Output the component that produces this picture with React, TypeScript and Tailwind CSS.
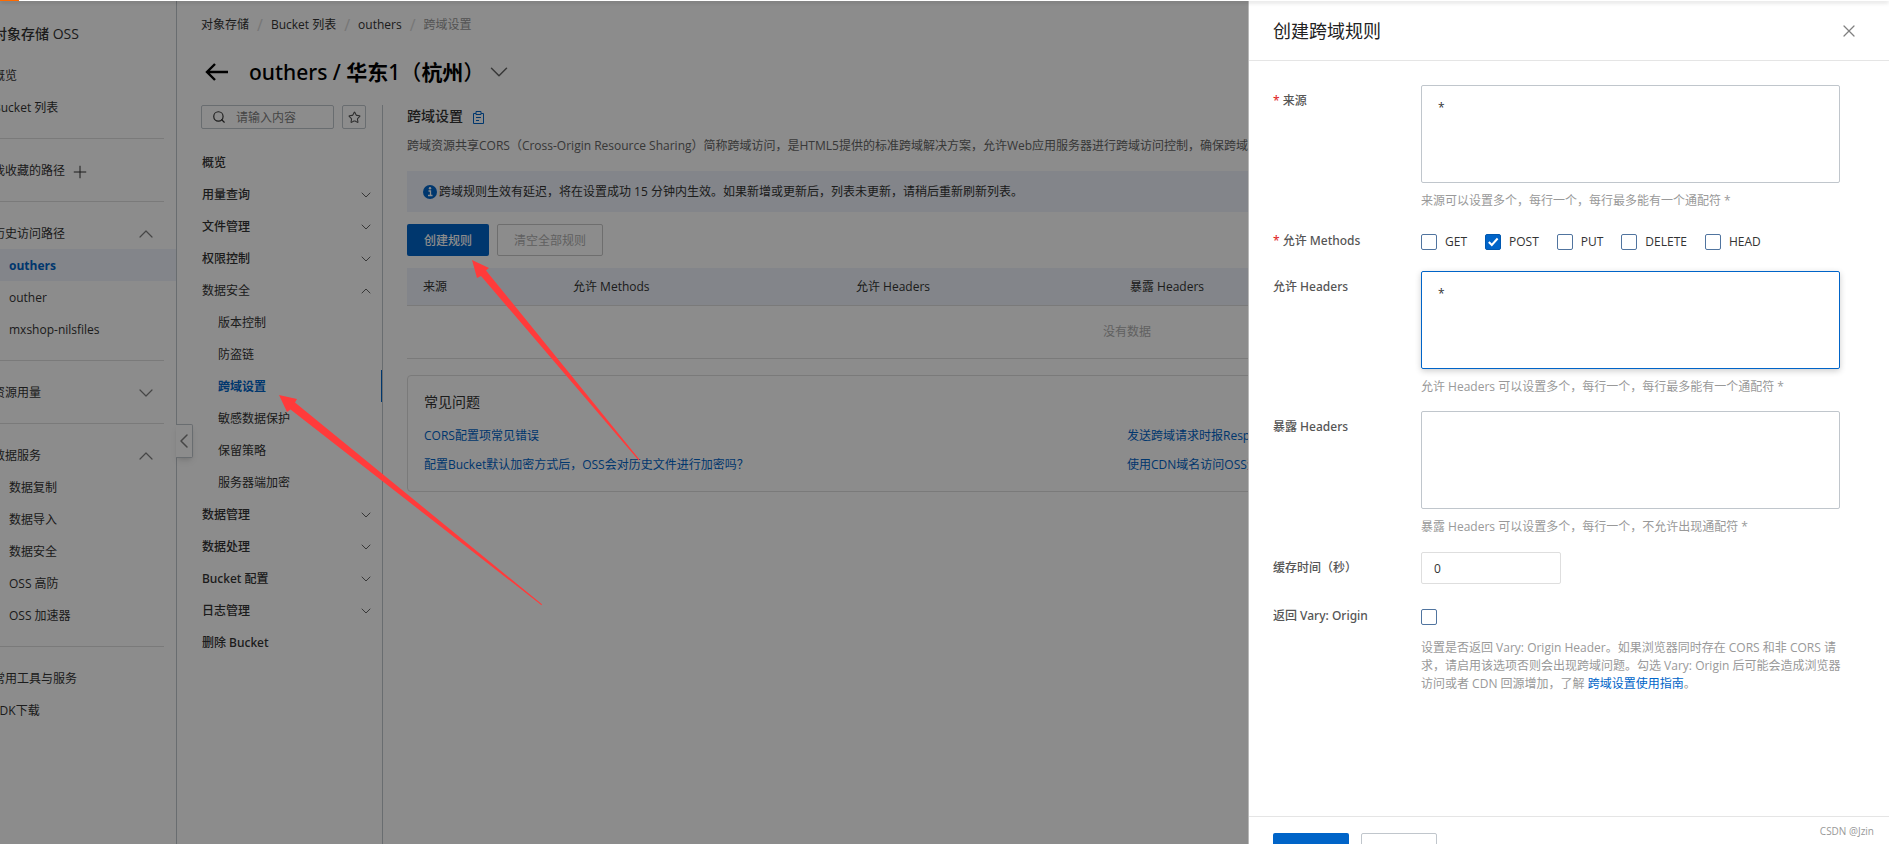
import { useState } from "react";
import { ChevronDown, ChevronLeft, ChevronUp, Plus, Search, Star, X } from "lucide-react";

const FAVORITES = ["outhers", "outher", "mxshop-nilsfiles"];
const DATA_SERVICES = ["数据复制", "数据导入", "数据安全", "OSS 高防", "OSS 加速器"];

const BUCKET_MENU = [
  { label: "概览" },
  { label: "用量查询", arrow: "down" },
  { label: "文件管理", arrow: "down" },
  { label: "权限控制", arrow: "down" },
  {
    label: "数据安全",
    arrow: "up",
    children: ["版本控制", "防盗链", "跨域设置", "敏感数据保护", "保留策略", "服务器端加密"],
  },
  { label: "数据管理", arrow: "down" },
  { label: "数据处理", arrow: "down" },
  { label: "Bucket 配置", arrow: "down" },
  { label: "日志管理", arrow: "down" },
  { label: "删除 Bucket" },
];

const METHODS = ["GET", "POST", "PUT", "DELETE", "HEAD"];

// Open Sans has no medium weight, Noto Sans does
const mediumFont = "font-['Noto_Sans','Noto_Sans_CJK_SC',sans-serif] font-medium";

const NavLink = ({ label, sub = false, active = false }: { label: string; sub?: boolean; active?: boolean }) => (
  <a
    href="#"
    className={`flex h-8 items-center pt-0.5 whitespace-nowrap ${sub ? "pl-4" : ""} ${
      active ? "-ml-4 bg-[#eff3fb] pl-8 font-bold text-[#0064c8]" : ""
    }`}
  >
    {label}
  </a>
);

const NavGroup = ({ title, open, children }: { title: string; open: boolean; children?: React.ReactNode }) => (
  <>
    <hr className="mr-3 border-[#dedede]" />
    <div className="py-[15px]">
      <button type="button" className="flex h-8 w-full items-center justify-between pt-0.5 pr-[18px]">
        {title}
        {open ? (
          <ChevronUp size={24} strokeWidth={1.2} className="text-[#808080]" />
        ) : (
          <ChevronDown size={24} strokeWidth={1.2} className="text-[#808080]" />
        )}
      </button>
      {children}
    </div>
  </>
);

const Sidebar = () => (
  <aside className="relative -ml-[7px] w-[184px] shrink-0 border-r border-[#c0c6cc]">
    <h2 className="flex h-[59px] items-center pt-2 text-sm font-medium whitespace-nowrap">对象存储 OSS</h2>
    <nav>
      <div className="pb-[15px]">
        <NavLink label="概览" />
        <NavLink label="Bucket 列表" />
      </div>
      <hr className="mr-3 border-[#dedede]" />
      <div className="py-[15px]">
        <button type="button" className="flex h-8 items-center gap-[5px] pt-0.5">
          我收藏的路径
          <Plus size={20} strokeWidth={1.2} className="mt-0.5" />
        </button>
      </div>
      <NavGroup title="历史访问路径" open>
        {FAVORITES.map((name, i) => (
          <NavLink key={name} label={name} sub={i > 0} active={i === 0} />
        ))}
      </NavGroup>
      <NavGroup title="资源用量" open={false} />
      <NavGroup title="数据服务" open>
        {DATA_SERVICES.map((name) => (
          <NavLink key={name} label={name} sub />
        ))}
      </NavGroup>
      <hr className="mr-3 border-[#dedede]" />
      <div className="py-[15px]">
        <NavLink label="常用工具与服务" />
        <NavLink label="SDK下载" />
      </div>
    </nav>
    <button
      type="button"
      aria-label="收起"
      className="absolute top-[424px] -right-[17px] flex h-[34px] w-[17px] items-center justify-center rounded-r-xs border border-l-0 border-[#c0c6cc] bg-white shadow-md"
    >
      <ChevronLeft size={24} strokeWidth={1.5} className="shrink-0 text-[#808080]" />
    </button>
  </aside>
);

const BucketMenu = () => (
  <div className="w-[182px] shrink-0 border-r border-[#c0c6cc]">
    <div className="flex gap-2">
      <label className="flex h-6 w-[133px] items-center gap-2.5 rounded-xs border border-[#c0c6cc] pl-2.5">
        <Search size={14} strokeWidth={2} className="shrink-0" />
        <input
          type="text"
          aria-label="请输入内容"
          placeholder="请输入内容"
          className="w-full min-w-0 pt-0.5 outline-none placeholder:text-[#808080]"
        />
      </label>
      <button
        type="button"
        aria-label="收藏"
        className="flex size-6 items-center justify-center rounded-xs border border-[#c0c6cc] text-[#555]"
      >
        <Star size={13} strokeWidth={2} />
      </button>
    </div>
    <nav className="pt-[17px]">
      {BUCKET_MENU.map((item) => (
        <div key={item.label}>
          <a
            href="#"
            className={`flex h-8 items-center justify-between pt-0.5 pr-2 pl-px ${item.children ? "" : mediumFont}`}
          >
            {item.label}
            {item.arrow === "down" && <ChevronDown size={16} strokeWidth={1.5} className="text-[#666]" />}
            {item.arrow === "up" && <ChevronUp size={16} strokeWidth={1.5} className="text-[#666]" />}
          </a>
          {item.children?.map((child) => (
            <a
              key={child}
              href="#"
              className={`flex h-8 items-center pt-0.5 pl-[17px] ${
                child === "跨域设置" ? "border-r border-[#0064c8] font-bold text-[#0064c8]" : ""
              }`}
            >
              {child}
            </a>
          ))}
        </div>
      ))}
    </nav>
  </div>
);

const CorsPanel = () => (
  <section className="min-w-0 flex-1 pl-6">
    <h2 className="flex h-[22px] items-center gap-2.5 text-sm font-medium">
      跨域设置
      <svg width="11" height="13" viewBox="0 0 11 13" fill="none" stroke="#0064c8" className="mt-0.5">
        <path d="M3 2.500H.5v10h10v-10H8" />
        <path d="M3 .500h5v3H3zM3 6.500h5M3 9.500h3" />
      </svg>
    </h2>
    <p className="mt-2.5 h-[18px] leading-[18px] whitespace-nowrap text-[#666]">
      跨域资源共享CORS（Cross-Origin Resource Sharing）简称跨域访问，是HTML5提供的标准跨域解决方案，允许Web应用服务器进行跨域访问控制，确保跨域数据传输的安全性。
    </p>
    <div className="mt-4 flex h-[41px] items-center gap-0.5 bg-[#eff3fb] px-4">
      <svg width="14" height="14" viewBox="0 0 14 14">
        <circle cx="7" cy="7" r="7" fill="#0064c8" />
        <path d="M5.500 6h2v4.500M5 10.500h4.500" stroke="#fff" strokeWidth="1.300" fill="none" />
        <circle cx="7" cy="3.300" r="1.200" fill="#fff" />
      </svg>
      跨域规则生效有延迟，将在设置成功 15 分钟内生效。如果新增或更新后，列表未更新，请稍后重新刷新列表。
    </div>
    <div className="mt-3 flex gap-2">
      <button type="button" className="h-8 w-[82px] rounded-xs bg-[#0064c8] pt-0.5 font-medium text-white">
        创建规则
      </button>
      <button type="button" disabled className="h-8 w-[106px] rounded-xs border border-[#c8c8c8] pt-0.5 text-[#b0b0b0]">
        清空全部规则
      </button>
    </div>
    <table className="mt-3 w-full table-fixed text-left">
      <thead>
        <tr className="h-[37px] border-b border-[#dedede] bg-[#eff3fb]">
          <th className="w-[150px] pt-0.5 pl-4 font-normal">来源</th>
          <th className="w-[283px] pt-0.5 pl-4 font-normal">允许 Methods</th>
          <th className="w-[274px] pt-0.5 pl-4 font-normal">允许 Headers</th>
          <th className="pt-0.5 pl-4 font-normal">暴露 Headers</th>
        </tr>
      </thead>
      <tbody>
        <tr className="h-[53px] border-b border-[#dedede]">
          <td colSpan={4} className="text-center text-[#b0b0b0]">
            没有数据
          </td>
        </tr>
      </tbody>
    </table>
    <div className="mt-4 rounded border border-[#dedede] px-4 pt-4 pb-3">
      <h3 className="text-sm leading-5">常见问题</h3>
      <div className="mt-[9px] grid grid-cols-2 leading-[29px] whitespace-nowrap text-[#0064c8]">
        <a href="#">CORS配置项常见错误</a>
        <a href="#">发送跨域请求时报Response报错</a>
        <a href="#">配置Bucket默认加密方式后，OSS会对历史文件进行加密吗？</a>
        <a href="#">使用CDN域名访问OSS资源跨域报错</a>
      </div>
    </div>
  </section>
);

const Checkbox = ({ id, checked, onChange }: { id: string; checked: boolean; onChange: () => void }) => (
  <span className="relative flex size-4">
    <input
      id={id}
      type="checkbox"
      checked={checked}
      onChange={onChange}
      className="size-4 appearance-none rounded-xs border border-[#50749f] bg-white checked:border-[#0058b0] checked:bg-[#0064c8]"
    />
    {checked && (
      <svg viewBox="0 0 16 16" className="pointer-events-none absolute inset-0" fill="none" stroke="#fff" strokeWidth="2">
        <path d="M3.800 8l3 3 5.800-6.500" />
      </svg>
    )}
  </span>
);

const Field = ({
  label,
  htmlFor,
  required = false,
  children,
}: {
  label: string;
  htmlFor?: string;
  required?: boolean;
  children: React.ReactNode;
}) => (
  <div className="flex">
    <label htmlFor={htmlFor} className={`w-[148px] shrink-0 pt-[7px] text-[#555] ${mediumFont}`}>
      {required && <span className="mr-[3px] font-normal text-[#e02020]">*</span>}
      {label}
    </label>
    <div className="min-w-0 flex-1">{children}</div>
  </div>
);

const areaClass = "block h-[98px] w-full resize-none rounded-xs border px-4 py-[13px] outline-none";
const helpClass = "-mb-px pt-[9px] text-[#999]";

const CreateRuleDrawer = () => {
  const [methods, setMethods] = useState<string[]>(["POST"]);
  const [vary, setVary] = useState(false);

  const toggle = (m: string) =>
    setMethods((list) => (list.includes(m) ? list.filter((x) => x !== m) : [...list, m]));

  return (
    <div className="fixed top-0 right-0 -bottom-[37px] flex w-[641px] flex-col border-l border-[#b8b8b8] bg-white">
      <header className="flex h-[61px] items-center justify-between border-b border-[#e5e5e5] pt-0.5 pr-[30px] pl-6">
        <h2 className="text-lg text-[#222]">创建跨域规则</h2>
        <button type="button" aria-label="关闭" className="text-[#808080]">
          <X size={20} strokeWidth={1.5} />
        </button>
      </header>
      <form className="flex flex-1 flex-col gap-4 pt-6 pr-[49px] pl-6 leading-[18px]">
        <Field label="来源" htmlFor="origin" required>
          <textarea id="origin" defaultValue="*" className={`${areaClass} border-[#c0c6cc]`} />
          <p className={helpClass}>来源可以设置多个，每行一个，每行最多能有一个通配符 *</p>
        </Field>
        <Field label="允许 Methods" required>
          <div className="flex h-[30px] items-center gap-[18px] pt-1">
            {METHODS.map((m) => (
              <div key={m} className="flex items-center gap-2">
                <Checkbox id={m} checked={methods.includes(m)} onChange={() => toggle(m)} />
                <label htmlFor={m}>{m}</label>
              </div>
            ))}
          </div>
        </Field>
        <Field label="允许 Headers" htmlFor="allow-headers">
          <textarea
            id="allow-headers"
            defaultValue="*"
            className={`${areaClass} border-[#0064c8] shadow-[0_2px_6px_rgba(0,0,0,0.2)]`}
          />
          <p className={helpClass}>允许 Headers 可以设置多个，每行一个，每行最多能有一个通配符 *</p>
        </Field>
        <Field label="暴露 Headers" htmlFor="expose-headers">
          <textarea id="expose-headers" className={`${areaClass} border-[#c0c6cc]`} />
          <p className="pt-[9px] text-[#999]">暴露 Headers 可以设置多个，每行一个，不允许出现通配符 *</p>
        </Field>
        <Field label="缓存时间（秒）" htmlFor="max-age">
          <input
            id="max-age"
            type="text"
            defaultValue="0"
            className="block h-8 w-[140px] rounded-xs border border-[#dedede] px-3 outline-none"
          />
        </Field>
        <Field label="返回 Vary: Origin" htmlFor="vary">
          <div className="flex h-8 items-center pt-0.5">
            <Checkbox id="vary" checked={vary} onChange={() => setVary(!vary)} />
          </div>
          <p className="-mr-1.5 pt-[7px] text-[#999]">
            设置是否返回 Vary: Origin Header。如果浏览器同时存在 CORS 和非 CORS 请求，请启用该选项否则会出现跨域问题。勾选 Vary: Origin 后可能会造成浏览器访问或者 CDN 回源增加，了解{" "}
            <a href="#" className="text-[#0064c8]">
              跨域设置使用指南
            </a>
            。
          </p>
        </Field>
      </form>
      <footer className="flex items-start gap-3 border-t border-[#e5e5e5] px-6 py-4">
        <button type="button" aria-label="确定" className="h-8 w-[76px] rounded-xs bg-[#0064c8]" />
        <button type="button" aria-label="取消" className="h-8 w-[76px] rounded-xs border border-[#c0c6cc]" />
      </footer>
      <span className="absolute top-[822px] right-[15px] text-[10px] leading-[18px] text-[#999]">CSDN @Jzin</span>
    </div>
  );
};

const Arrows = () => (
  <svg className="pointer-events-none fixed inset-0 h-full w-full" fill="#ff3b3b">
    <polygon points="472,260 489,268 486,270.500 639.500,459.500 638.500,460.300 481,276 477,278" />
    <polygon points="279,395 297,399 295,402.500 542,604.300 541.500,605.200 290.500,409.500 287,412" />
  </svg>
);

const App = () => {
  return (
    <div className="flex h-screen overflow-hidden bg-white font-['Open_Sans','Noto_Sans_CJK_SC',sans-serif] text-xs text-[#333]">
      <Sidebar />
      <main className="flex min-w-0 flex-1 flex-col pr-[42px] pl-6">
        <nav className="flex items-center gap-2 pt-4 leading-[18px]">
          <a href="#">对象存储</a>
          <span className="text-base leading-[18px] text-[#d8d8d8]">/</span>
          <a href="#">Bucket 列表</a>
          <span className="text-base leading-[18px] text-[#d8d8d8]">/</span>
          <a href="#">outhers</a>
          <span className="text-base leading-[18px] text-[#d8d8d8]">/</span>
          <span className="text-[#999]">跨域设置</span>
        </nav>
        <div className="mt-5 flex h-9 items-center text-black">
          <button type="button" aria-label="返回" className="mr-5 pl-1">
            <svg width="24" height="20" viewBox="0 0 24 20" fill="none" stroke="currentColor" strokeWidth="2.400">
              <path d="M10 2L2 10l8 8M2 10h21" />
            </svg>
          </button>
          <h1 className={`text-[21px] ${mediumFont}`}>
            outhers / <span className="font-bold">华东</span>1（<span className="font-bold">杭州</span>）
          </h1>
          <ChevronDown size={30} strokeWidth={1.2} className="text-[#666]" />
        </div>
        <div className="mt-[15px] flex min-h-0 flex-1">
          <BucketMenu />
          <CorsPanel />
        </div>
      </main>
      <div className="fixed inset-0 bg-black/45" />
      <CreateRuleDrawer />
      <div className="fixed inset-x-0 top-0 h-px bg-white shadow-[0_1px_4px_rgba(0,0,0,0.4)]">
        <div className="h-px w-[19px] bg-[#ff6a00]" />
      </div>
      <Arrows />
    </div>
  );
};

export default App;
